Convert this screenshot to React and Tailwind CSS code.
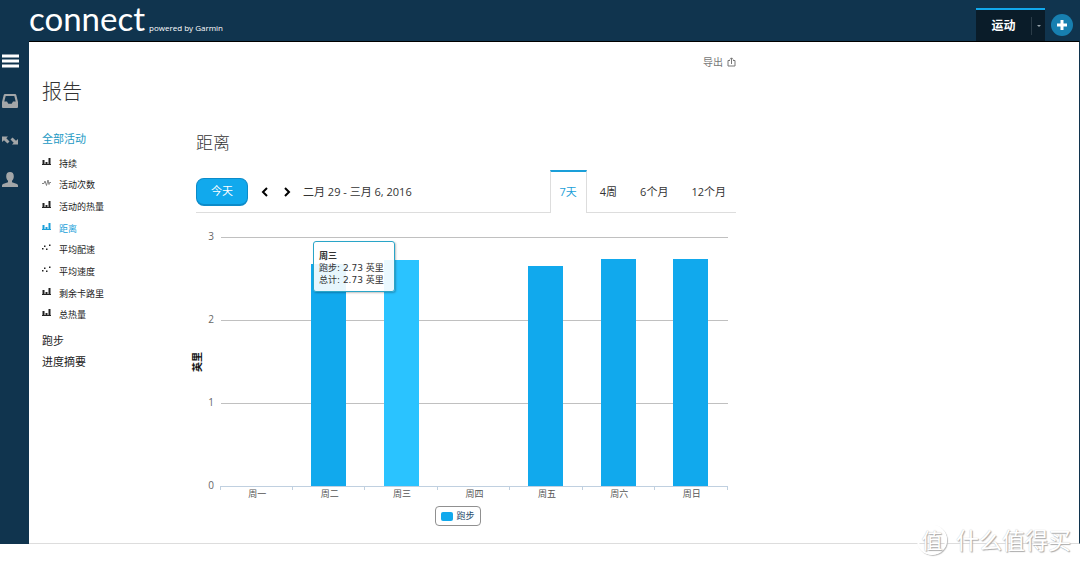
import React from 'react';

const activityLinks = [
    { label: '持续', icon: 'bars' },
    { label: '活动次数', icon: 'pulse' },
    { label: '活动的热量', icon: 'bars' },
    { label: '距离', icon: 'bars', active: true },
    { label: '平均配速', icon: 'dots' },
    { label: '平均速度', icon: 'dots' },
    { label: '剩余卡路里', icon: 'bars' },
    { label: '总热量', icon: 'bars' },
];

const ranges = ['7天', '4周', '6个月', '12个月'];

const days = [
    { label: '周一', miles: 0 },
    { label: '周二', miles: 2.68 },
    { label: '周三', miles: 2.72, hovered: true },
    { label: '周四', miles: 0 },
    { label: '周五', miles: 2.65 },
    { label: '周六', miles: 2.74 },
    { label: '周日', miles: 2.73 },
];

const MenuIcon = ({ type }) => {
    if (type === 'pulse') {
        return (
            <svg viewBox="0 0 9 8" className="w-[9px] h-2" fill="none" stroke="#777" aria-hidden="true">
                <path d="M0 4.5h2L3 2l1.5 4.5L6 1l1 4.500L7.500 3.500H9" strokeWidth="0.9" />
            </svg>
        );
    }
    if (type === 'dots') {
        return (
            <svg viewBox="0 0 9 8" className="w-[9px] h-2" fill="currentColor" aria-hidden="true">
                <path d="M0 4h1.500v1.500h-1.500zM2 1.500h1.500v1.500h-1.500zM4 4.500h1.500v1.500h-1.500zM7 0.500h1.500v1.500h-1.500z" />
            </svg>
        );
    }
    return (
        <svg viewBox="0 0 9 8" className="w-[9px] h-2" fill="currentColor" aria-hidden="true">
            <path d="M0 6h9v1H0zM0.500 2h2v4.500h-2zM3.500 4h2v2.500h-2zM6.500 0h2v6.500h-2z" />
        </svg>
    );
};

const Header = () => (
    <header className="flex justify-between h-[41px] bg-[#10344e] text-white">
        <a href="#home" className="flex items-baseline pl-[29px]">
            <span className="font-[Lato] text-[33px] leading-[37px]">connect</span>
            <span className="ml-1 font-['Open_Sans'] text-[8px]">powered by Garmin</span>
        </a>
        <div className="flex pt-2 pr-[7px]">
            <div className="flex items-center w-[69px] bg-[#0a1c29] border-t-2 border-[#11a9ed]">
                <button className="w-[55px] text-[12px] font-bold">运动</button>
                <button aria-label="更多" className="flex items-center justify-center w-[14px] h-[18px] border-l border-[#2b3c48]">
                    <svg viewBox="0 0 4 2" className="w-1 h-[2px]" fill="#9aa5ad" aria-hidden="true">
                        <path d="M0 0h4L2 2z" />
                    </svg>
                </button>
            </div>
            <button aria-label="添加" className="flex items-center justify-center w-[22px] h-[22px] mt-[6px] ml-[6px] rounded-full bg-[#177fb0]">
                <svg viewBox="0 0 10 10" className="w-[10px] h-[10px]" fill="white" aria-hidden="true">
                    <path d="M3.500 0h3v3.500H10v3H6.500V10h-3V6.500H0v-3h3.500z" />
                </svg>
            </button>
        </div>
    </header>
);

const SideNav = () => (
    <nav className="flex flex-col w-[29px] shrink-0 bg-[#10344e] text-[#a3a6a8]">
        <button aria-label="菜单" className="h-10 pl-[2px] text-white">
            <svg viewBox="0 0 17 14" className="w-[17px] h-[14px]" fill="currentColor" aria-hidden="true">
                <path d="M0 0.500h17v3H0zM0 5.500h17v3H0zM0 10.500h17v3H0z" />
            </svg>
        </button>
        <button aria-label="收件箱" className="h-10 pl-[2px]">
            <svg viewBox="0 0 16 14" className="w-4 h-[14px]" fill="currentColor" fillRule="evenodd" aria-hidden="true">
                <path d="M3 0h10q1 0 1.300 1L16 8v5q0 1-1 1H1q-1 0-1-1V8L1.700 1Q2 0 3 0zM3.700 2L2.300 7.500H5l1.300 2.200h3.400L11 7.500h2.700L12.300 2z" />
            </svg>
        </button>
        <button aria-label="同步" className="h-[38px] pl-[2px]">
            <svg viewBox="0 0 16 9" className="w-4 h-[9px]" fill="currentColor" aria-hidden="true">
                <path d="M0 0.500h6L4.300 2.200L7.500 5.500L5.500 7.500L2 4.200L0 6z" />
                <path d="M16 8.500h-6l1.700-1.700L8.500 3.500L10.500 1.500L14 4.800L16 3z" />
            </svg>
        </button>
        <button aria-label="个人资料" className="h-10 pl-[2px]">
            <svg viewBox="0 0 16 15" className="w-4 h-[15px]" fill="currentColor" aria-hidden="true">
                <path d="M8 0c2.500 0 3.800 1.600 3.800 4.200 0 2-.8 3.800-1.800 4.600v1.400l5 1.800q1 .5 1 1.500V15H0v-1.500q0-1 1-1.500l5-1.800V8.800C5 8 4.200 6.200 4.200 4.200 4.200 1.600 5.500 0 8 0z" />
            </svg>
        </button>
    </nav>
);

const ReportMenu = () => (
    <aside className="w-[154px] shrink-0 text-[11px] text-[#222]">
        <h1 className="mt-[36px] text-[20px] leading-7 font-light text-[#333]">报告</h1>
        <a href="#all" className="block mt-[23px] leading-5 text-[#2299c4]">全部活动</a>
        <ul className="grid h-[173px] mt-1 text-[9px]">
            {activityLinks.map((link) => (
                <li key={link.label} className="flex items-center">
                    <a
                        href={`#${link.label}`}
                        className={link.active ? 'flex gap-2 text-[#1a9fd9]' : 'flex gap-2'}
                    >
                        <MenuIcon type={link.icon} />
                        <span className="leading-3">{link.label}</span>
                    </a>
                </li>
            ))}
        </ul>
        <a href="#running" className="block mt-1 leading-[21px]">跑步</a>
        <a href="#progress" className="block leading-[21px]">进度摘要</a>
    </aside>
);

const Toolbar = () => (
    <div className="flex justify-between h-[43px] mt-[15px] border-b border-[#ddd] text-[11px] text-[#333]">
        <div className="flex items-center pt-[2px]">
            <button className="w-[52px] h-7 rounded-lg border border-b-2 border-[#0c8bc9] bg-[#11a9ed] text-white">
                今天
            </button>
            <button aria-label="上一个" className="ml-[13px] text-black">
                <svg viewBox="0 0 8 10" className="w-2 h-[10px]" fill="none" stroke="currentColor" strokeWidth="2" aria-hidden="true">
                    <path d="M6 1L2 5l4 4" />
                </svg>
            </button>
            <button aria-label="下一个" className="ml-[14px] text-black">
                <svg viewBox="0 0 8 10" className="w-2 h-[10px]" fill="none" stroke="currentColor" strokeWidth="2" aria-hidden="true">
                    <path d="M2 1l4 4-4 4" />
                </svg>
            </button>
            <span className="ml-3">二月 29 - 三月 6, 2016</span>
        </div>
        <div className="flex gap-[3px] -mb-px">
            {ranges.map((range, i) => (
                <button
                    key={range}
                    className={
                        i === 0
                            ? 'px-[9px] border-x border-[#ddd] border-t-2 border-t-[#1a9fd9] bg-white text-[#1a9fd9]'
                            : 'px-[10px] pt-[2px]'
                    }
                >
                    {range}
                </button>
            ))}
        </div>
    </div>
);

const plot = { left: 25, right: 532, bottom: 273, unit: 83 };
const step = (plot.right - plot.left) / days.length;

const DistanceChart = () => (
    <div className="relative">
        <svg viewBox="0 0 540 287" className="block w-full overflow-visible" role="img" aria-label="距离">
            {[0, 1, 2, 3].map((n) => (
                <g key={n}>
                    <rect
                        x={plot.left}
                        y={plot.bottom - n * plot.unit}
                        width={plot.right - plot.left}
                        height="1"
                        fill={n === 0 ? '#c0d0e0' : '#c0c0c0'}
                    />
                    <text x="18" y={plot.bottom + 3 - n * plot.unit} textAnchor="end" className="text-[10px]" fill="#666">
                        {n}
                    </text>
                </g>
            ))}
            {[...days, null].map((_, i) => (
                <rect key={i} x={Math.floor(plot.left + i * step) - 1} y={plot.bottom} width="1" height="4" fill="#c0d0e0" />
            ))}
            {days.map((day, i) => {
                const center = plot.left + (i + 0.5) * step;
                const height = Math.round(day.miles * plot.unit);
                return (
                    <g key={day.label}>
                        {height > 0 && (
                            <rect
                                x={Math.floor(center - 18)}
                                y={plot.bottom - height}
                                width="35"
                                height={height}
                                fill={day.hovered ? '#2ac3ff' : '#11a9ed'}
                            />
                        )}
                        <text x={center} y="284" textAnchor="middle" className="text-[9px]" fill="#555">
                            {day.label}
                        </text>
                    </g>
                );
            })}
            <text transform="translate(5 149) rotate(-90)" textAnchor="middle" className="text-[10px] font-bold" fill="#111">
                英里
            </text>
        </svg>
        <div className="absolute left-[117px] top-[28px] w-[82px] h-[51px] pl-[5px] pt-2 rounded-[3px] border border-[#2aa5c8] bg-white/90 shadow-[1px_1px_2px_rgba(0,0,0,0.25)] font-['DejaVu_Sans','Noto_Sans_CJK_SC',sans-serif] text-[9px] leading-3 text-[#333] whitespace-nowrap">
            <p className="font-bold">周三</p>
            <p>跑步: 2.73 英里</p>
            <p>总计: 2.73 英里</p>
        </div>
    </div>
);

const Watermark = () => (
    <div className="absolute right-[9px] bottom-[10px] flex items-center gap-[9px] text-white [text-shadow:1px_1px_1px_#aaa,0_0_1px_#bbb]">
        <span className="flex items-center justify-center w-[30px] h-[30px] rounded-full border-2 border-white text-[21px] leading-none shadow-[1px_1px_1px_#bbb]">
            值
        </span>
        <span className="text-[23px] leading-8">什么值得买</span>
    </div>
);

export default function App() {
    return (
        <div className="relative pb-[22px] bg-white font-['Open_Sans','Noto_Sans_CJK_SC',sans-serif]">
            <Header />
            <div className="flex">
                <SideNav />
                <main className="flex flex-1 pl-[13px] pb-[17px] border-t border-t-black border-r border-r-[#10344e] border-b border-b-[#ddd]">
                    <ReportMenu />
                    <section className="flex-1 max-w-[540px]">
                        <div className="flex items-center justify-end h-10 text-[#777]">
                            <button className="flex items-center gap-1 text-[10px]">
                                导出
                                <svg viewBox="0 0 9 10" className="w-[9px] h-[10px]" fill="none" stroke="currentColor" aria-hidden="true">
                                    <path d="M3 3.500H1v5.500h7V3.500H6M4.500 7V1M2.800 2.500L4.500 0.800L6.200 2.500" />
                                </svg>
                            </button>
                        </div>
                        <h2 className="mt-[49px] text-[17px] leading-6 font-light text-[#333]">距离</h2>
                        <Toolbar />
                        <DistanceChart />
                        <div className="flex justify-center pr-4 mt-[6px]">
                            <button className="flex items-center gap-[3px] h-5 px-[5px] rounded border border-[#909090] text-[9px] text-[#274b6d]">
                                <span className="w-3 h-[9px] rounded-[2px] bg-[#11a9ed]" />
                                跑步
                            </button>
                        </div>
                    </section>
                </main>
            </div>
            <Watermark />
        </div>
    );
}
